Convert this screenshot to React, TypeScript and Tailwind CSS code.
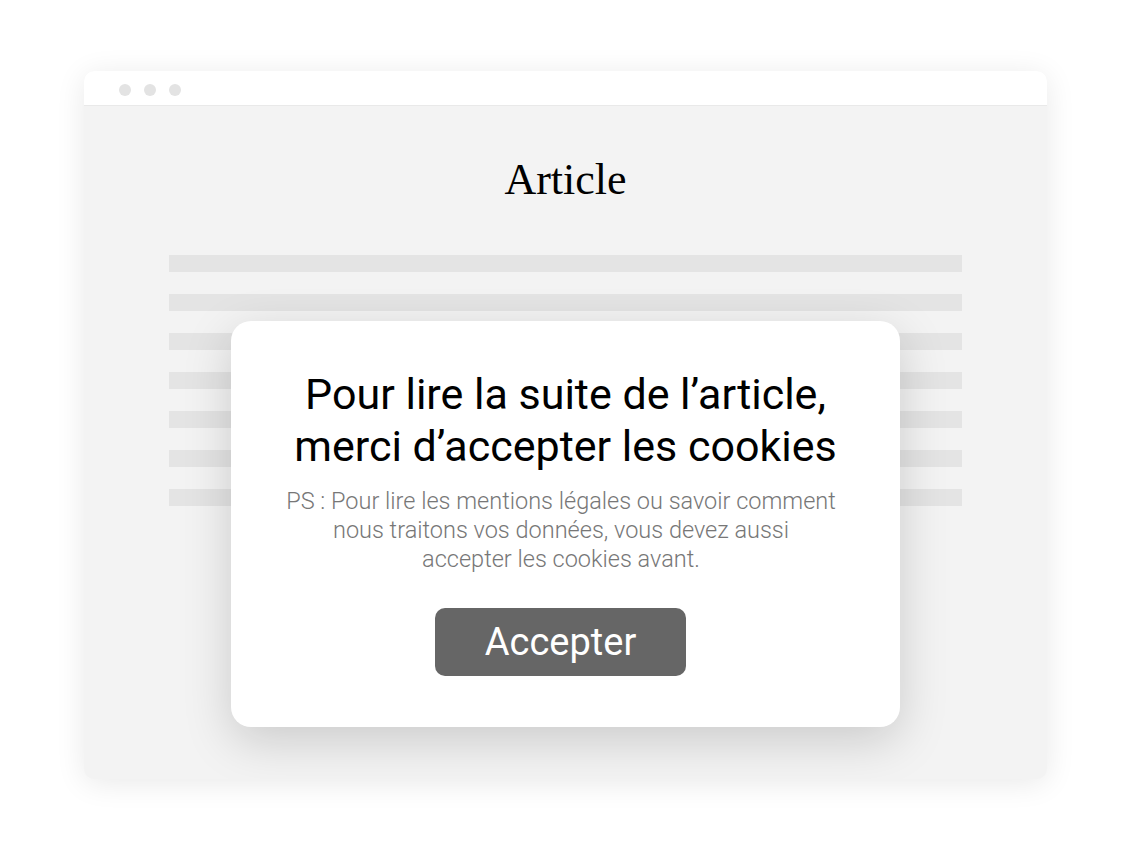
export default function App() {
  const lines = [0, 1, 2, 3, 4, 5, 6]

  return (
    <div className="min-h-screen bg-white pt-[71px]" style={{ fontFamily: 'Roboto, "Liberation Sans", sans-serif' }}>
      <div className="relative mx-auto w-[963px] h-[708px] rounded-[10px] bg-[#f3f3f3] shadow-[0_4px_30px_rgba(0,0,0,0.09)] overflow-hidden">
        {/* barre du navigateur */}
        <div className="h-[35px] bg-white border-b border-[#e9e9e9] flex items-center gap-[13px] pl-[35px] pt-[4px]">
          <div className="w-3 h-3 rounded-full bg-[#e3e3e3]" />
          <div className="w-3 h-3 rounded-full bg-[#e3e3e3]" />
          <div className="w-3 h-3 rounded-full bg-[#e3e3e3]" />
        </div>

        {/* article */}
        <h1 className="mt-[52px] text-center text-[44px] leading-[44px] text-black font-['Liberation_Serif',serif]">
          Article
        </h1>
        <div className="mt-[53px] mx-[85px] flex flex-col gap-[22px]">
          {lines.map((i) => (
            <div key={i} className="h-[17px] bg-[#e4e4e4]" />
          ))}
        </div>

        {/* modale cookies */}
        <div className="absolute left-[147px] top-[250px] w-[669px] h-[406px] rounded-[20px] bg-white shadow-[0_14px_48px_rgba(0,0,0,0.17)] flex flex-col items-center pt-[47px]">
          <h2 className="text-center text-[43px] leading-[52px] text-black">
            Pour lire la suite de l’article,
            <br />
            merci d’accepter les cookies
          </h2>
          <p className="mt-[15px] mr-[9px] text-center text-[23.5px] leading-[29px] font-light text-[#777777]">
            PS : Pour lire les mentions légales ou savoir comment
            <br />
            nous traitons vos données, vous devez aussi
            <br />
            accepter les cookies avant.
          </p>
          <button className="mt-[34px] mr-[10px] w-[251px] h-[68px] rounded-[10px] bg-[#666666] text-white text-[38px]">
            Accepter
          </button>
        </div>
      </div>
    </div>
  )
}
